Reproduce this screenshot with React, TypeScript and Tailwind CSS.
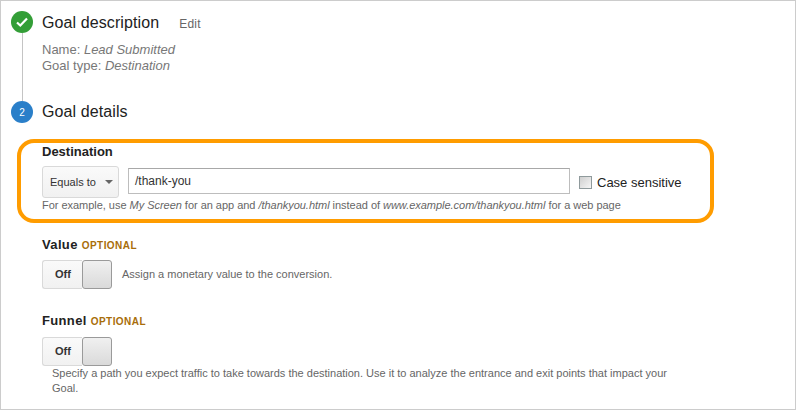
import React from "react";

function Toggle() {
  return (
    <div className="flex w-[70px] h-[29px]">
      <div className="w-[40px] rounded-l-[3px] border border-r-0 border-[#d9d9d9] bg-gradient-to-b from-[#fafafa] to-[#f1f1f1] flex items-center justify-center text-[11px] font-bold text-[#333] pl-[1px]">Off</div>
      <div className="w-[30px] rounded-[3px] border border-[#9a9a9a] bg-gradient-to-b from-[#f0f0f0] to-[#dadada]" />
    </div>
  );
}

function Heading({ label }: { label: string }) {
  return (
    <div className="flex items-baseline gap-[4px] h-[16px] leading-[16px]">
      <span className="text-[13px] font-bold text-[#222] tracking-[0.35px]">{label}</span>
      <span className="text-[10px] font-bold text-[#a86d0a] tracking-[0.45px]">OPTIONAL</span>
    </div>
  );
}

export default function App() {
  return (
    <div className="w-[796px] h-[410px] bg-white border border-[#cccccc] overflow-hidden font-['Liberation_Sans',Arial,sans-serif]">
      <div className="flex pl-[10px] pt-[10px]">
        <div className="flex flex-col items-center w-[22px]">
          <div className="w-[22px] h-[22px] rounded-full bg-[#339e37] flex items-center justify-center shrink-0">
            <svg width="14" height="12" viewBox="0 0 14 12" fill="none">
              <path d="M2 6.5 L5.3 9.5 L12 2.5" stroke="white" strokeWidth="2.2" />
            </svg>
          </div>
          <div className="w-px h-[68px] bg-[#c4c4c4]" />
          <div className="w-[22px] h-[22px] rounded-full bg-[#2a7fc9] flex items-center justify-center shrink-0 text-[10px] text-white">2</div>
        </div>
        <div className="ml-[9px] flex flex-col pt-[1px]">
          <div className="flex items-baseline h-[22px]">
            <span className="text-[16px] leading-[22px] text-[#222] tracking-[0.1px]">Goal description</span>
            <span className="ml-[20px] text-[12px] text-[#666] tracking-[0.2px]">Edit</span>
          </div>
          <div className="mt-[8px] text-[13px] leading-[16px] text-[#777]">
            <div>Name: <i>Lead Submitted</i></div>
            <div>Goal type: <i>Destination</i></div>
          </div>
          <div className="mt-[27px] text-[16px] leading-[22px] text-[#222] tracking-[0.1px]">Goal details</div>
        </div>
      </div>

      <div className="ml-[16px] mt-[16px] w-[697px] h-[84px] rounded-[17px] border-[4px] border-[#ff9c00] pl-[21px] pt-[1px]">
        <div className="text-[13px] font-bold leading-[16px] text-[#222]">Destination</div>
        <div className="flex mt-[6px] items-start h-[32px]">
          <div className="w-[77px] h-[32px] rounded-[3px] border border-[#d9d9d9] bg-gradient-to-b from-[#fafafa] to-[#f1f1f1] flex items-center pl-[7px] text-[11px] text-[#333]">
            Equals to
            <span className="ml-[9px] w-0 h-0 border-x-[4px] border-x-transparent border-t-[4px] border-t-[#666]" />
          </div>
          <div className="ml-[9px] mt-[2px] w-[442px] h-[26px] border border-[#bdbdbd] border-t-[#a8a8a8] pl-[6px] flex items-center text-[12px] text-[#333]">/thank-you</div>
          <div className="ml-[9px] mt-[10px] w-[13px] h-[13px] border border-[#8f9a9c] bg-gradient-to-br from-[#cfcfcf] to-[#f6f6f6]" />
          <div className="ml-[5px] mt-[9px] text-[13px] leading-[16px] text-[#222]">Case sensitive</div>
        </div>
        <div className="text-[11px] leading-[14px] text-[#666] tracking-[-0.03px]">
          For example, use <i>My Screen</i> for an app and <i>/thankyou.html</i> instead of <i>www.example.com/thankyou.html</i> for a web page
        </div>
      </div>

      <div className="ml-[41px] mt-[14px]">
        <Heading label="Value" />
        <div className="flex items-center mt-[7px]">
          <Toggle />
          <div className="ml-[10px] text-[11px] text-[#666]">Assign a monetary value to the conversion.</div>
        </div>
      </div>

      <div className="ml-[41px] mt-[24px]">
        <Heading label="Funnel" />
        <div className="mt-[8px]"><Toggle /></div>
        <div className="ml-[10px] w-[630px] text-[11px] leading-[15px] text-[#666]">
          Specify a path you expect traffic to take towards the destination. Use it to analyze the entrance and exit points that impact your Goal.
        </div>
      </div>
    </div>
  );
}
